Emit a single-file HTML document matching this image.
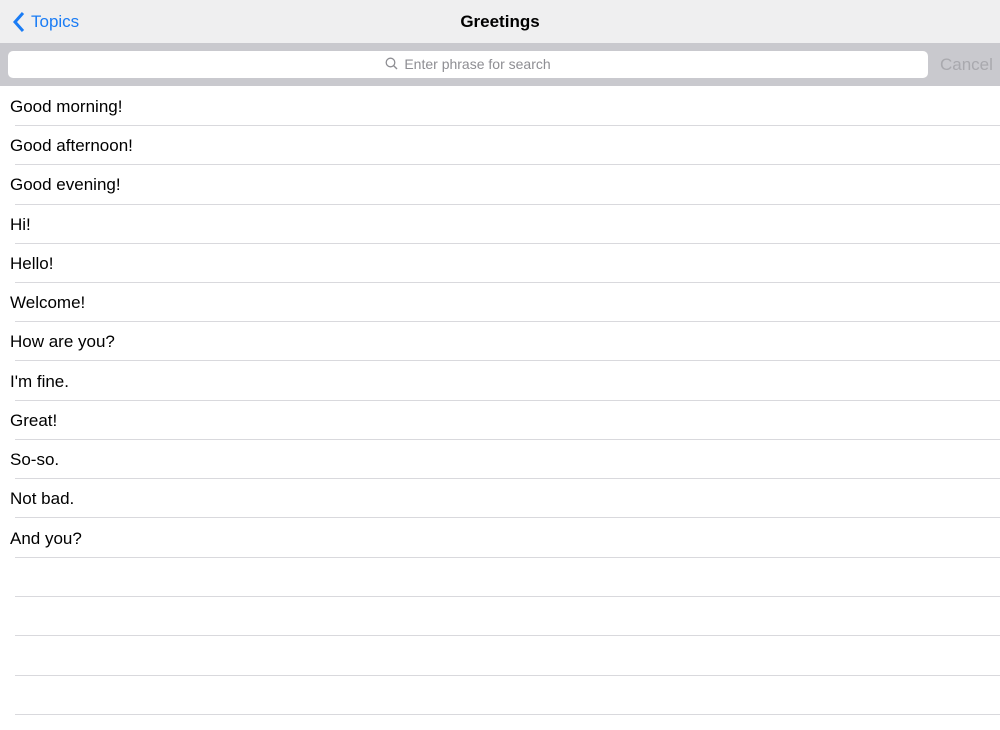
<!DOCTYPE html>
<html><head><style>
body{margin:0;width:1000px;height:730px;overflow:hidden;background:#fff;font-family:"Liberation Sans",sans-serif;position:relative}
.nav{position:absolute;left:0;top:0;width:1000px;height:43px;background:#efeff0;}
.back{position:absolute;left:31px;top:12px;font-size:17px;color:#1a7cf5}
.title{position:absolute;left:0;width:1000px;top:12px;text-align:center;font-size:17px;font-weight:bold;color:#000}
.sb{position:absolute;left:0;top:43px;width:1000px;height:43px;background:#c9c9ce}
.field{position:absolute;left:8px;top:8px;width:920px;height:27px;background:#fff;border-radius:5px}
.ph{position:absolute;left:0;width:936px;top:13px;text-align:center;font-size:14px;color:#8e8e93}
.cancel{position:absolute;left:940px;top:12px;font-size:17px;color:#a9a9ae}
.row{position:absolute;left:10px;font-size:17px;color:#000}
.sep{position:absolute;left:15px;right:0;height:1px;background:#d9d9dd}
</style></head><body>
<div class="nav">
<svg style="position:absolute;left:12px;top:11px" width="14" height="22" viewBox="0 0 14 22"><path d="M11 2 L3 11 L11 20" fill="none" stroke="#1a7cf5" stroke-width="3"/></svg>
<div class="back">Topics</div>
<div class="title">Greetings</div>
</div>
<div class="sb"><div class="field"></div>
<div class="ph"><svg width="13" height="13" viewBox="0 0 13 13" style="vertical-align:-1px;margin-right:6px"><circle cx="5.5" cy="5.5" r="4.3" fill="none" stroke="#8e8e93" stroke-width="1.3"/><path d="M8.6 8.6 L12 12" stroke="#8e8e93" stroke-width="1.4"/></svg>Enter phrase for search</div>
<div class="cancel">Cancel</div></div>
<div class="row" style="top:97px">Good morning!</div>
<div class="row" style="top:136px">Good afternoon!</div>
<div class="row" style="top:175px">Good evening!</div>
<div class="row" style="top:215px">Hi!</div>
<div class="row" style="top:254px">Hello!</div>
<div class="row" style="top:293px">Welcome!</div>
<div class="row" style="top:332px">How are you?</div>
<div class="row" style="top:372px">I'm fine.</div>
<div class="row" style="top:411px">Great!</div>
<div class="row" style="top:450px">So-so.</div>
<div class="row" style="top:489px">Not bad.</div>
<div class="row" style="top:529px">And you?</div>
<div class="sep" style="top:125px"></div><div class="sep" style="top:164px"></div><div class="sep" style="top:204px"></div><div class="sep" style="top:243px"></div><div class="sep" style="top:282px"></div><div class="sep" style="top:321px"></div><div class="sep" style="top:360px"></div><div class="sep" style="top:400px"></div><div class="sep" style="top:439px"></div><div class="sep" style="top:478px"></div><div class="sep" style="top:517px"></div><div class="sep" style="top:557px"></div><div class="sep" style="top:596px"></div><div class="sep" style="top:635px"></div><div class="sep" style="top:675px"></div><div class="sep" style="top:714px"></div>
</body></html>
